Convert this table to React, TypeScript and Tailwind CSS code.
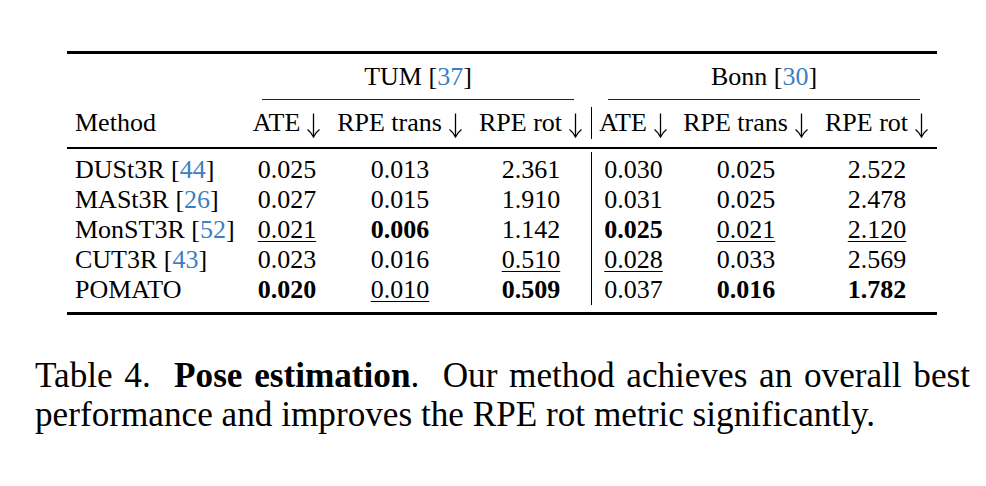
import React from "react"

type Cell = { v: string; s?: "b" | "u" }

const rows: { name: string; cite?: string; tum: Cell[]; bonn: Cell[] }[] = [
  {
    name: "DUSt3R",
    cite: "44",
    tum: [{ v: "0.025" }, { v: "0.013" }, { v: "2.361" }],
    bonn: [{ v: "0.030" }, { v: "0.025" }, { v: "2.522" }],
  },
  {
    name: "MASt3R",
    cite: "26",
    tum: [{ v: "0.027" }, { v: "0.015" }, { v: "1.910" }],
    bonn: [{ v: "0.031" }, { v: "0.025" }, { v: "2.478" }],
  },
  {
    name: "MonST3R",
    cite: "52",
    tum: [{ v: "0.021", s: "u" }, { v: "0.006", s: "b" }, { v: "1.142" }],
    bonn: [{ v: "0.025", s: "b" }, { v: "0.021", s: "u" }, { v: "2.120", s: "u" }],
  },
  {
    name: "CUT3R",
    cite: "43",
    tum: [{ v: "0.023" }, { v: "0.016" }, { v: "0.510", s: "u" }],
    bonn: [{ v: "0.028", s: "u" }, { v: "0.033" }, { v: "2.569" }],
  },
  {
    name: "POMATO",
    tum: [{ v: "0.020", s: "b" }, { v: "0.010", s: "u" }, { v: "0.509", s: "b" }],
    bonn: [{ v: "0.037" }, { v: "0.016", s: "b" }, { v: "1.782", s: "b" }],
  },
]

function Num({ c }: { c: Cell }) {
  if (c.s === "b") return <span className="font-bold">{c.v}</span>
  if (c.s === "u")
    return <span className="underline decoration-1 underline-offset-[3px]">{c.v}</span>
  return <span>{c.v}</span>
}

function Cite({ n }: { n: string }) {
  return (
    <>
      {" "}[<span className="text-[#3b7fc4]">{n}</span>]
    </>
  )
}

// math-style down arrow, taller than the caps
function Down() {
  return (
    <svg width="15" height="25" viewBox="0 0 15 25" className="inline-block align-[-7px] ml-[6px]">
      <path d="M7.5 0.5 V23.5" stroke="black" strokeWidth="1.3" fill="none" />
      <path d="M1.5 16.5 Q5.5 19.5 7.5 24 Q9.5 19.5 13.5 16.5" stroke="black" strokeWidth="1.3" fill="none" />
    </svg>
  )
}

function Head({ t }: { t: string }) {
  return (
    <div className="text-center whitespace-nowrap">
      {t}
      <Down />
    </div>
  )
}

export default function App() {
  return (
    <div className="w-[986px] h-[486px] bg-white text-black font-['Liberation_Serif','Times_New_Roman',serif] overflow-hidden">
      <div className="ml-[67px] w-[870px] pt-[51px] text-[26px] leading-[30px]">
        {/* toprule */}
        <div className="h-[3px] bg-black" />

        {/* group header */}
        <div className="grid grid-cols-[178px_346px_346px]">
          <div />
          <div>
            <div className="pt-[8px] pb-[7px] text-center">
              TUM<Cite n="37" />
            </div>
            <div className="mx-[17px] h-px bg-[#222]" />
          </div>
          <div>
            <div className="pt-[8px] pb-[7px] text-center">
              Bonn<Cite n="30" />
            </div>
            <div className="mx-[17px] h-px bg-[#222]" />
          </div>
        </div>

        {/* column header */}
        <div className="flex pt-[7px] pb-[8px]">
          <div className="grid grid-cols-[178px_84px_142px_120px] leading-[32px]">
            <div className="pl-[8px]">Method</div>
            <Head t="ATE" />
            <Head t="RPE trans" />
            <Head t="RPE rot" />
          </div>
          <div className="grid grid-cols-[83px_142px_120px] border-l border-black leading-[32px]">
            <Head t="ATE" />
            <Head t="RPE trans" />
            <Head t="RPE rot" />
          </div>
        </div>

        {/* midrule */}
        <div className="h-[2px] bg-black" />

        {/* body */}
        <div className="flex pt-[3px]">
          <div className="pt-[3px] w-[524px]">
            {rows.map((r) => (
              <div key={r.name} className="grid grid-cols-[178px_84px_142px_120px]">
                <div className="pl-[8px] whitespace-nowrap">
                  {r.name}
                  {r.cite && <Cite n={r.cite} />}
                </div>
                {r.tum.map((c, i) => (
                  <div key={i} className="text-center">
                    <Num c={c} />
                  </div>
                ))}
              </div>
            ))}
          </div>
          <div className="pt-[3px] border-l border-black">
            {rows.map((r) => (
              <div key={r.name} className="grid grid-cols-[83px_142px_120px]">
                {r.bonn.map((c, i) => (
                  <div key={i} className="text-center">
                    <Num c={c} />
                  </div>
                ))}
              </div>
            ))}
          </div>
        </div>

        {/* bottomrule */}
        <div className="mt-[7px] h-[3px] bg-black" />
      </div>

      <p className="ml-[35px] mt-[41px] w-[935px] text-[35.2px] leading-[39px] text-justify">
        Table 4.&nbsp; <span className="font-bold">Pose estimation</span>.&nbsp; Our method achieves an overall best
        performance and improves the RPE rot metric significantly.
      </p>
    </div>
  )
}
